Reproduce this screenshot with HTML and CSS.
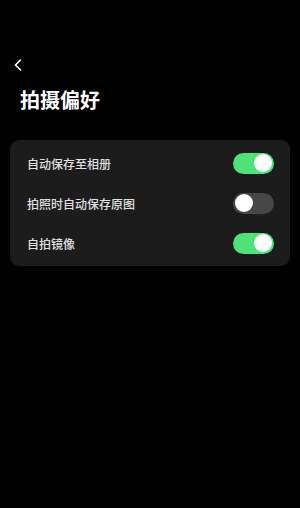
FILE: index.html
```html
<!DOCTYPE html>
<html lang="zh-CN">
<head>
    <meta charset="UTF-8">
    <meta name="viewport" content="width=device-width, initial-scale=1.0">
    <title>拍摄偏好</title>
    <link rel="stylesheet" href="styles.css">
</head>
<body>
    <div class="header">
        <button class="back-btn">
            <svg width="8" height="12" viewBox="0 0 8 12"><path d="M6.5 1 L1.5 6 L6.5 11" fill="none" stroke="#fff" stroke-width="1.6" stroke-linecap="round" stroke-linejoin="round"/></svg>
        </button>
        <h1 class="title">拍摄偏好</h1>
    </div>
    <div class="settings-card">
        <div class="setting-row">
            <span>自动保存至相册</span>
            <div class="switch on"><div class="knob"></div></div>
        </div>
        <div class="setting-row">
            <span>拍照时自动保存原图</span>
            <div class="switch"><div class="knob"></div></div>
        </div>
        <div class="setting-row">
            <span>自拍镜像</span>
            <div class="switch on"><div class="knob"></div></div>
        </div>
    </div>
</body>
</html>
```

FILE: styles.css
```css
body {
    font-family: "Noto Sans CJK SC", "Noto Sans", sans-serif;
    background-color: #000;
    color: #fff;
    margin: 0;
    padding: 0;
}
.header {
    padding: 57px 0 0 0;
}
.back-btn {
    background: none;
    border: none;
    padding: 0;
    margin-left: 14px;
    width: 10px;
    height: 16px;
    display: flex;
    align-items: center;
    cursor: pointer;
}
.title {
    font-size: 20px;
    font-weight: bold;
    margin: 12px 0 0 20px;
    line-height: 30px;
}
.settings-card {
    background: #1c1c1c;
    margin: 25px 10px 0 10px;
    border-radius: 9px;
    padding: 3px 0;
}
.setting-row {
    height: 40px;
    display: flex;
    align-items: center;
    justify-content: space-between;
    padding: 0 16px 0 17px;
    font-size: 12px;
    font-weight: 500;
    color: #e0e0e0;
}
.switch {
    width: 41px;
    height: 21px;
    border-radius: 11px;
    background: #474747;
    position: relative;
}
.switch.on {
    background: #4fe27a;
}
.knob {
    width: 18px;
    height: 18px;
    border-radius: 50%;
    background: #fff;
    position: absolute;
    top: 1.5px;
    left: 2px;
}
.switch.on .knob {
    left: 21px;
}
```
